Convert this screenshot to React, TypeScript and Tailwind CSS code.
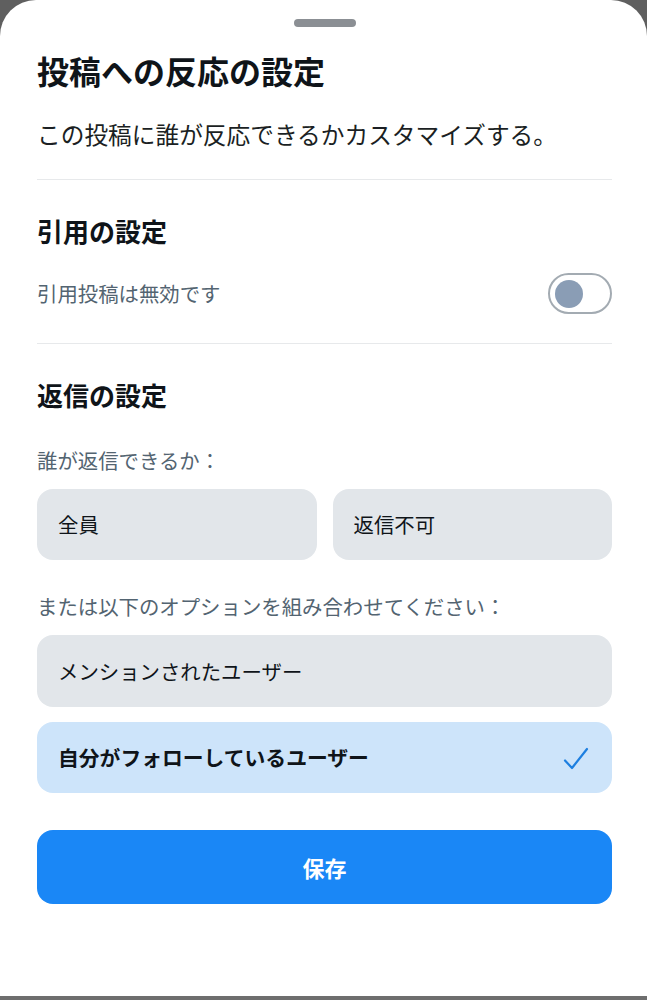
import React, { useState } from 'react';

const font = { fontFamily: '"Noto Sans CJK JP", "Noto Sans", sans-serif' };

export default function App() {
  const [quoteEnabled, setQuoteEnabled] = useState(false);
  const [replyMode, setReplyMode] = useState<'all' | 'none' | null>(null);
  const [mentioned, setMentioned] = useState(false);
  const [following, setFollowing] = useState(true);

  return (
    <div className="h-[1000px] bg-[#5f5f5f] flex flex-col" style={font}>
      <div className="flex-1 bg-white rounded-t-[36px] pl-[37px] pr-[35px] text-[#0f1419]">
        {/* drag handle */}
        <div className="pt-[19px] flex justify-center">
          <div className="w-[62px] h-[8px] rounded-full bg-[#8b8f94]" />
        </div>

        <h1 className="mt-[23px] text-[32px] leading-[40px] font-bold">投稿への反応の設定</h1>
        <p className="mt-[28px] text-[23.7px] leading-[32px] text-[#1b1f23]">
          この投稿に誰が反応できるかカスタマイズする。
        </p>

        <div className="mt-[29px] h-px bg-[#e7e9eb]" />

        <h2 className="mt-[33px] text-[26px] leading-[36px] font-bold">引用の設定</h2>
        <div className="mt-[24px] h-[41px] flex items-center justify-between">
          <span className="text-[20.4px] text-[#536471]">
            {quoteEnabled ? '引用投稿は有効です' : '引用投稿は無効です'}
          </span>
          <button
            onClick={() => setQuoteEnabled(!quoteEnabled)}
            className={`w-[64px] h-[41px] rounded-full border-2 flex items-center px-[5px] ${
              quoteEnabled ? 'border-[#1a87f6] justify-end' : 'border-[#a3abb2] justify-start'
            }`}
          >
            <span
              className={`w-[28px] h-[28px] rounded-full ${
                quoteEnabled ? 'bg-[#1a87f6]' : 'bg-[#8a9db5]'
              }`}
            />
          </button>
        </div>

        <div className="mt-[29px] h-px bg-[#e7e9eb]" />

        <h2 className="mt-[33px] text-[26px] leading-[36px] font-bold">返信の設定</h2>
        <p className="mt-[32px] text-[20.4px] leading-[30px] text-[#536471]">誰が返信できるか：</p>

        <div className="mt-[14px] grid grid-cols-2 gap-[16px]">
          <button
            onClick={() => setReplyMode(replyMode === 'all' ? null : 'all')}
            className={`h-[71px] rounded-[16px] text-left pl-[21px] text-[20.4px] ${
              replyMode === 'all' ? 'bg-[#cde4fa] font-bold' : 'bg-[#e2e6ea]'
            }`}
          >
            全員
          </button>
          <button
            onClick={() => setReplyMode(replyMode === 'none' ? null : 'none')}
            className={`h-[71px] rounded-[16px] text-left pl-[21px] text-[20.4px] ${
              replyMode === 'none' ? 'bg-[#cde4fa] font-bold' : 'bg-[#e2e6ea]'
            }`}
          >
            返信不可
          </button>
        </div>

        <p className="mt-[31px] text-[20.4px] leading-[30px] text-[#536471]">
          または以下のオプションを組み合わせてください：
        </p>

        <button
          onClick={() => setMentioned(!mentioned)}
          className={`mt-[14px] w-full h-[72px] rounded-[16px] flex items-center justify-between pl-[21px] pr-[22px] text-[20.4px] ${
            mentioned ? 'bg-[#cde4fa] font-bold' : 'bg-[#e2e6ea]'
          }`}
        >
          <span>メンションされたユーザー</span>
          {mentioned && <Check />}
        </button>
        <button
          onClick={() => setFollowing(!following)}
          className={`mt-[15px] w-full h-[71px] rounded-[16px] flex items-center justify-between pl-[21px] pr-[22px] text-[20.8px] ${
            following ? 'bg-[#cde4fa] font-bold' : 'bg-[#e2e6ea]'
          }`}
        >
          <span>自分がフォローしているユーザー</span>
          {following && <Check />}
        </button>

        <button className="mt-[37px] w-full h-[74px] rounded-[16px] bg-[#1a87f6] text-white text-[22px] font-bold">
          保存
        </button>
      </div>
      <div className="h-[4px] bg-[#6e6e6e]" />
    </div>
  );
}

function Check() {
  return (
    <svg width="28" height="28" viewBox="0 0 28 28" fill="none">
      <path d="M3 16.5 L10 24 L25 5" stroke="#1d7fe0" strokeWidth="2.2" strokeLinecap="round" strokeLinejoin="round" />
    </svg>
  );
}
